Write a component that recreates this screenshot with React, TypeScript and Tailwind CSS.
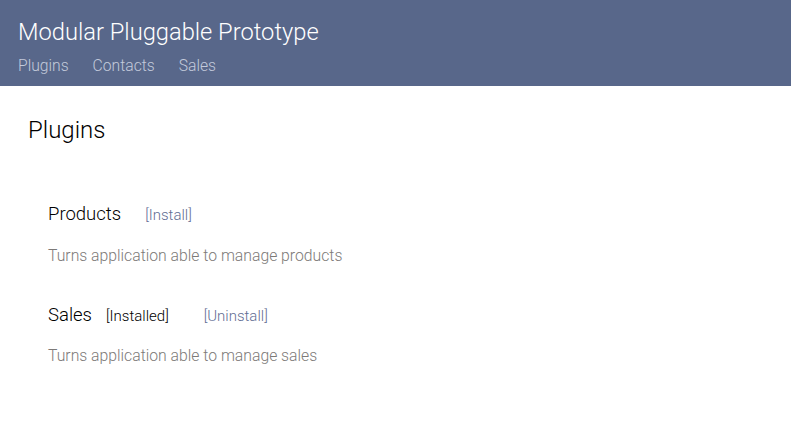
const plugins = [
  { name: 'Products', installed: false, description: 'Turns application able to manage products' },
  { name: 'Sales', installed: true, description: 'Turns application able to manage sales' },
];

export default function App() {
  return (
    <div className="min-h-screen bg-white font-['Roboto',sans-serif] font-light">
      <header className="h-[86px] bg-[#58678a] px-[18px] pt-[16px]">
        <h1 className="text-[23.7px] leading-[32px] text-white">Modular Pluggable Prototype</h1>
        <nav className="mt-[6px] flex gap-[24px] text-[15.7px] leading-[24px] text-[#c3cadb]">
          <a href="#">Plugins</a>
          <a href="#">Contacts</a>
          <a href="#">Sales</a>
        </nav>
      </header>

      <main className="px-[28px] pt-[28px]">
        <h2 className="text-[24px] leading-[32px] text-black">Plugins</h2>

        <div className="mt-[56px] flex flex-col gap-[35px] pl-[20px]">
          {plugins.map((p) => (
            <div key={p.name}>
              <div className="flex items-baseline">
                <span className="text-[18.5px] leading-[24px] text-black">{p.name}</span>
                {p.installed && <span className="ml-[14px] text-[15px] text-black">[Installed]</span>}
                <a
                  href="#"
                  className={`text-[15px] text-[#5f6d93] ${p.installed ? 'ml-[35px]' : 'ml-[24px]'}`}
                >
                  {p.installed ? '[Uninstall]' : '[Install]'}
                </a>
              </div>
              <p className="mt-[17px] text-[15.75px] leading-[24px] text-[#7d7a78]">{p.description}</p>
            </div>
          ))}
        </div>
      </main>
    </div>
  );
}
